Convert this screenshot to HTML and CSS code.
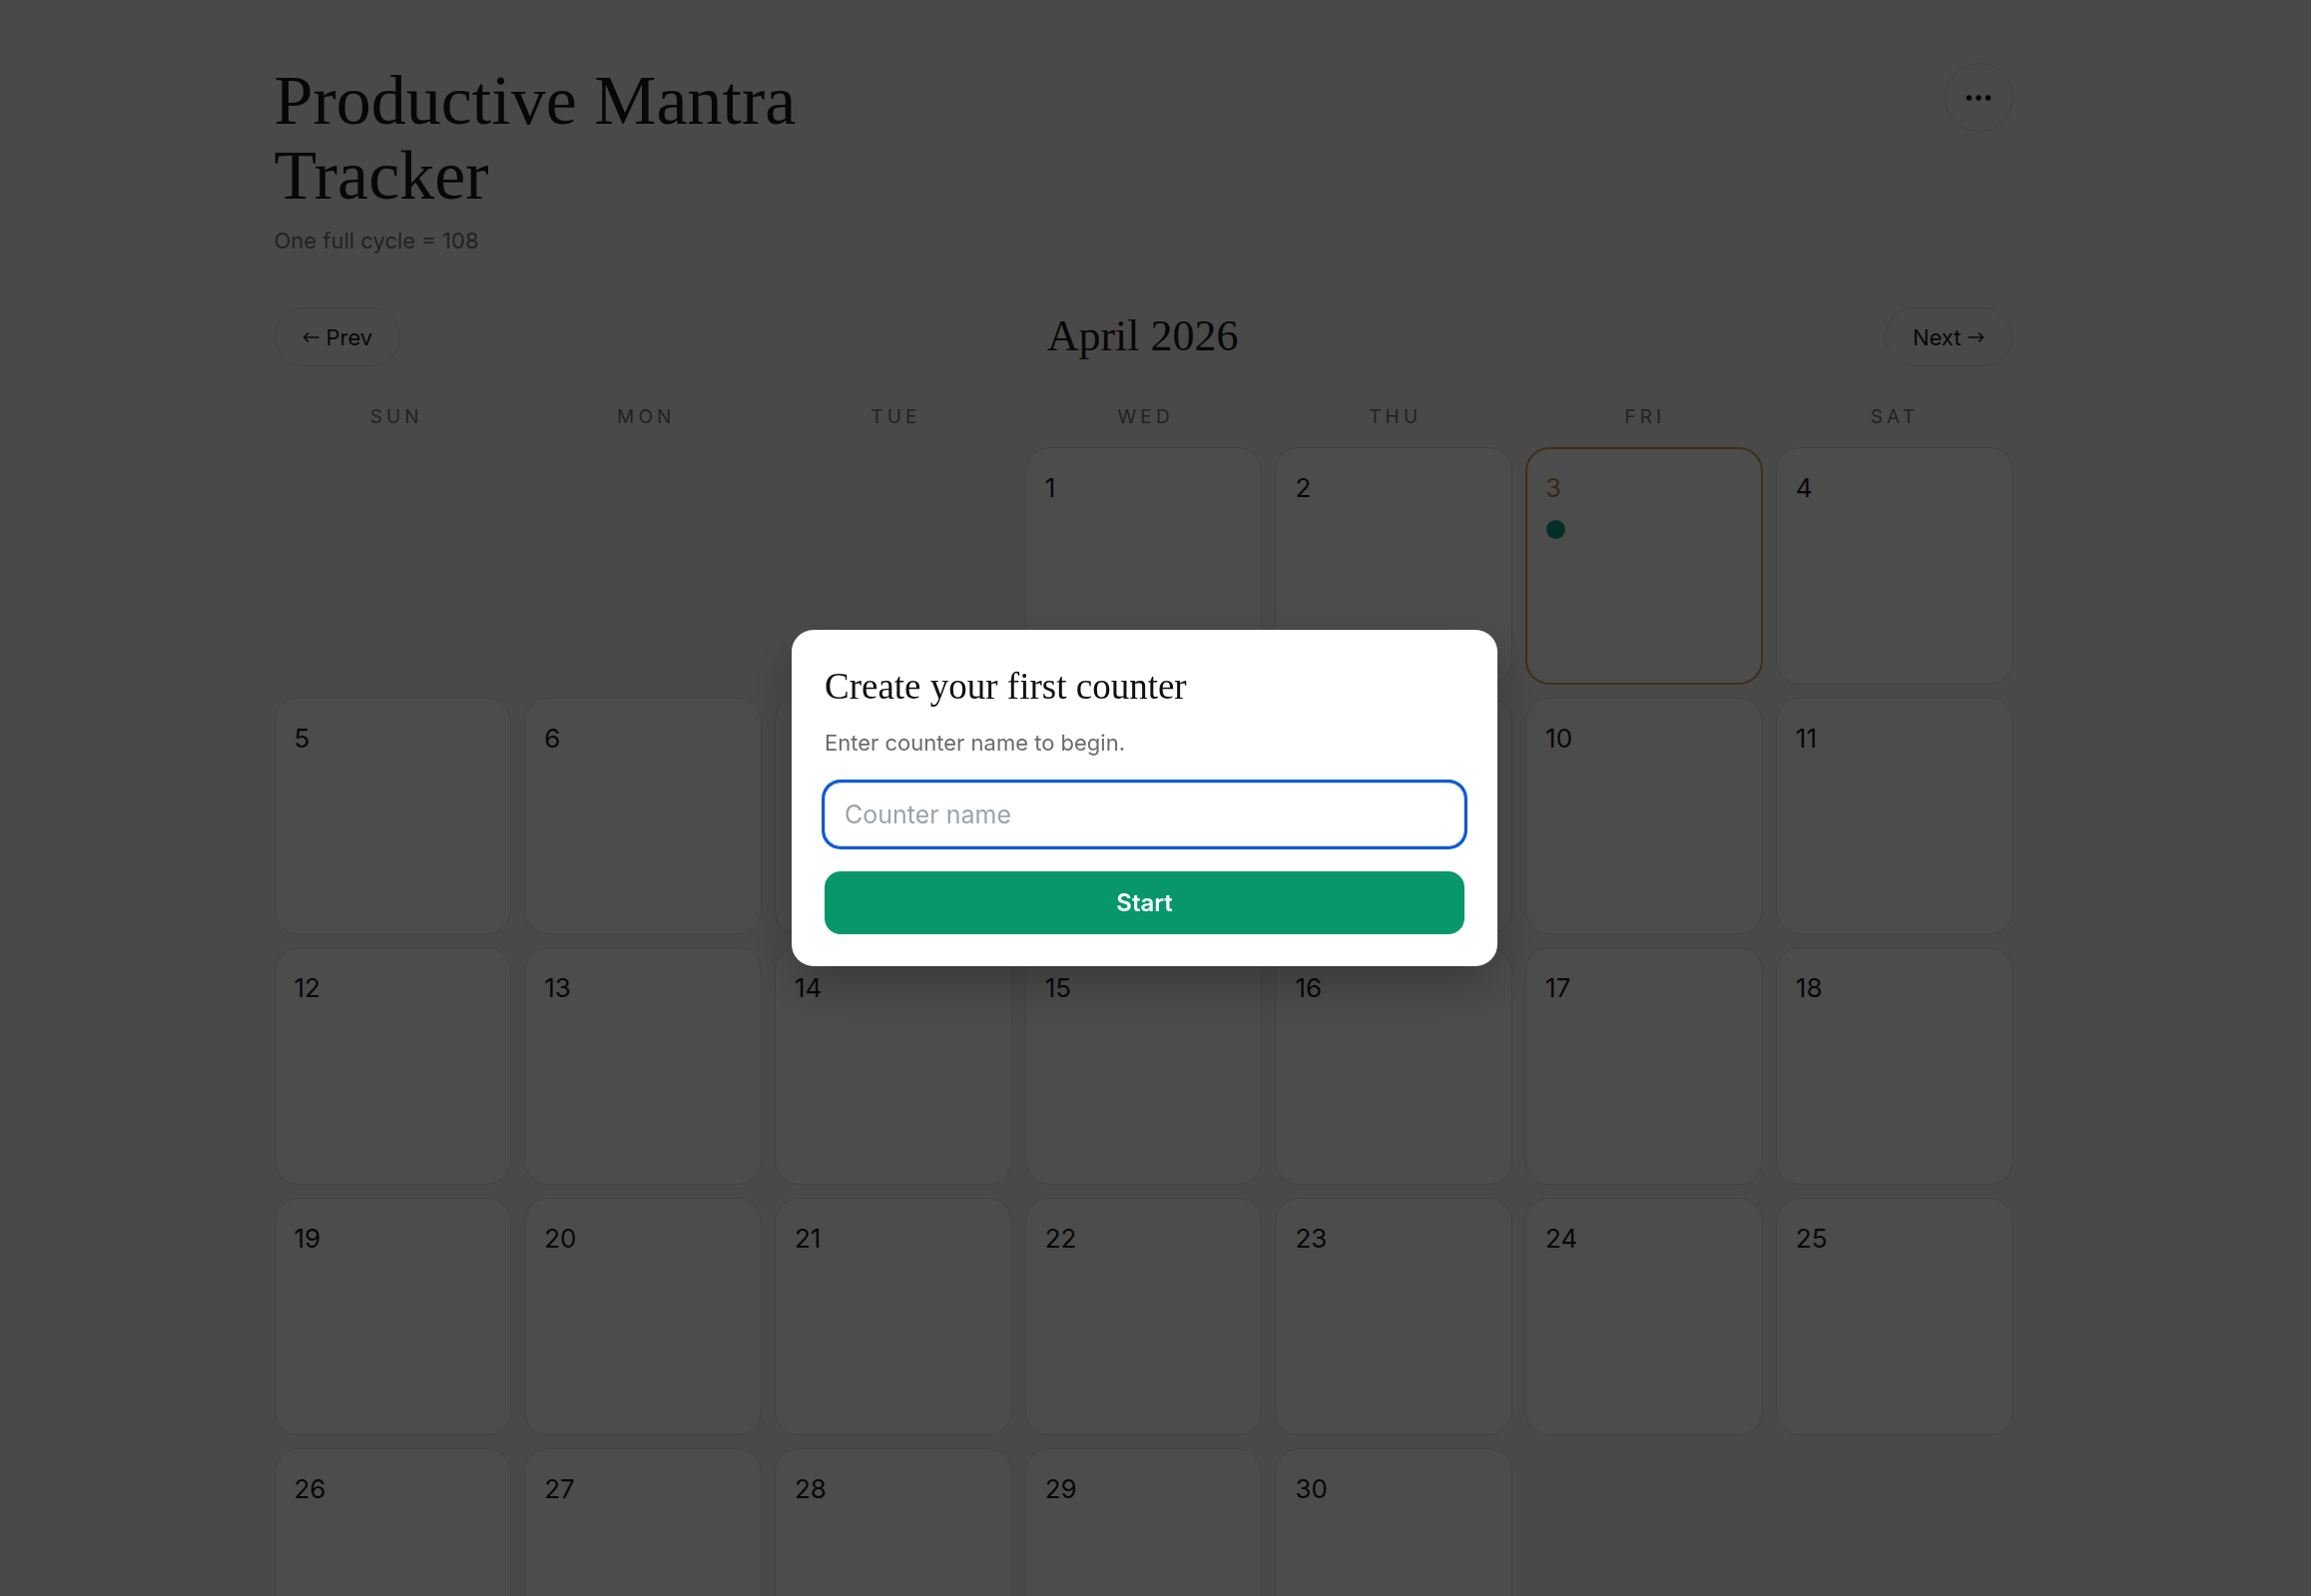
FILE: index.html
```html
<!DOCTYPE html>
<html lang="en">
<head>
    <meta charset="UTF-8">
    <meta name="viewport" content="width=device-width, initial-scale=1.0">
    <title>Productive Mantra Tracker</title>
    <link rel="stylesheet" href="styles.css">
</head>
<body>
    <div class="container">
        <div class="header">
            <div>
                <h1 class="title">Productive Mantra Tracker</h1>
                <p class="subtitle">One full cycle = 108</p>
            </div>
            <button class="menu-btn" aria-label="Menu">
                <svg width="28" height="8" viewBox="0 0 28 8">
                    <circle cx="4.5" cy="4" r="2.7" />
                    <circle cx="14" cy="4" r="2.7" />
                    <circle cx="23.5" cy="4" r="2.7" />
                </svg>
            </button>
        </div>

        <div class="month-nav">
            <button class="nav-btn">
                <svg class="arrow" width="17" height="12" viewBox="0 0 17 12">
                    <path d="M16 6H1.5M5.5 2L1.5 6l4 4" />
                </svg>
                Prev
            </button>
            <h2 class="month-title">April 2026</h2>
            <button class="nav-btn">
                Next
                <svg class="arrow" width="17" height="12" viewBox="0 0 17 12">
                    <path d="M1 6h14.5M11.5 2l4 4-4 4" />
                </svg>
            </button>
        </div>

        <div class="weekdays">
            <div>SUN</div>
            <div>MON</div>
            <div>TUE</div>
            <div>WED</div>
            <div>THU</div>
            <div>FRI</div>
            <div>SAT</div>
        </div>

        <div class="calendar" id="calendar"></div>
    </div>

    <div class="overlay">
        <div class="modal">
            <h3 class="modal-title">Create your first counter</h3>
            <p class="modal-text">Enter counter name to begin.</p>
            <input type="text" class="name-input" placeholder="Counter name" autofocus>
            <button class="start-btn">Start</button>
        </div>
    </div>

    <script>
        const calendar = document.getElementById('calendar');
        const firstDay = 3;   // April 1, 2026 is a Wednesday
        const daysInMonth = 30;
        const today = 3;

        for (let i = 0; i < firstDay; i++) {
            const empty = document.createElement('div');
            empty.className = 'day empty';
            calendar.appendChild(empty);
        }

        for (let d = 1; d <= daysInMonth; d++) {
            const cell = document.createElement('div');
            cell.className = d === today ? 'day today' : 'day';
            cell.innerHTML = `<span class="day-num">${d}</span>`;
            if (d === today) {
                cell.innerHTML += '<span class="dot"></span>';
            }
            calendar.appendChild(cell);
        }
    </script>
</body>
</html>
```

FILE: styles.css
```css
* {
    margin: 0;
    padding: 0;
    box-sizing: border-box;
}

html, body {
    overflow: hidden;
}

body {
    background: #f5f5f4;
    font-family: 'Inter', 'Noto Sans', sans-serif;
    color: #1c1917;
    padding-right: 24px;
    min-height: 100vh;
}

.container {
    max-width: 1742px;
    margin: 0 auto;
    padding-top: 63px;
}

.header {
    display: flex;
    justify-content: space-between;
    align-items: flex-start;
}

.title {
    font-family: 'Liberation Serif', 'Times New Roman', serif;
    font-weight: 400;
    font-size: 70px;
    line-height: 75px;
    max-width: 640px;
    color: #1c1917;
}

.subtitle {
    margin-top: 12px;
    font-size: 22px;
    line-height: 33px;
    color: #737373;
}

.menu-btn {
    width: 69px;
    height: 69px;
    border-radius: 50%;
    border: 1px solid #dcdad6;
    background: transparent;
    display: flex;
    align-items: center;
    justify-content: center;
}

.menu-btn svg {
    fill: #111;
}

.month-nav {
    margin-top: 50px;
    display: flex;
    justify-content: space-between;
    align-items: center;
}

.nav-btn {
    height: 59px;
    padding: 0 27px;
    border: 1px solid #dcdad6;
    border-radius: 999px;
    background: transparent;
    font-family: 'Inter', sans-serif;
    font-size: 22px;
    color: #1c1917;
    display: flex;
    align-items: center;
    gap: 7px;
}

.arrow {
    fill: none;
    stroke: #1c1917;
    stroke-width: 1.6;
    stroke-linecap: round;
    stroke-linejoin: round;
}

.month-title {
    font-family: 'Liberation Serif', 'Times New Roman', serif;
    font-weight: 400;
    font-size: 44px;
    line-height: 1.2;
    color: #1c1917;
}

.weekdays {
    margin-top: 39px;
    display: grid;
    grid-template-columns: repeat(7, 1fr);
    gap: 13px;
    text-align: center;
    font-size: 19px;
    line-height: 23px;
    letter-spacing: 0.22em;
    padding-left: 0.22em;
    color: #78716c;
}

.calendar {
    margin-top: 19px;
    display: grid;
    grid-template-columns: repeat(7, 1fr);
    gap: 13px;
}

.day {
    aspect-ratio: 1;
    background: #fff;
    border: 1px solid #dfdcd8;
    border-radius: 24px;
    padding: 24px 19px;
    display: flex;
    flex-direction: column;
    align-items: flex-start;
}

.day.empty {
    background: none;
    border: none;
}

.day-num {
    font-size: 26px;
    line-height: 1.2;
}

.day.today {
    border: 2px solid #cf9f50;
    padding: 23px 18px;
}

.day.today .day-num {
    color: #b98a3e;
}

.dot {
    margin-top: 17px;
    margin-left: 1px;
    width: 19px;
    height: 19px;
    border-radius: 50%;
    background: #0e9f8a;
}

.overlay {
    position: fixed;
    inset: 0;
    background: rgba(0, 0, 0, 0.7);
    display: flex;
    justify-content: center;
    align-items: center;
    padding-right: 22px;
}

.modal {
    width: 707px;
    background: #fff;
    border-radius: 22px;
    padding: 35px 33px 32px;
    box-shadow: 0 20px 50px rgba(0, 0, 0, 0.25);
}

.modal-title {
    font-family: 'Liberation Serif', 'Times New Roman', serif;
    font-weight: 400;
    font-size: 37px;
    line-height: 1.2;
    color: #111;
}

.modal-text {
    margin-top: 17px;
    font-size: 22px;
    line-height: 1.5;
    color: #6b6b6b;
}

.name-input {
    display: block;
    margin-top: 23px;
    width: 100%;
    height: 64px;
    padding: 0 19px;
    border: 1px solid #d4d4d8;
    border-radius: 16px;
    font-family: 'Inter', sans-serif;
    font-size: 25px;
    color: #1c1917;
    outline: none;
    box-shadow: 0 0 0 3px #0a5bd6;
}

.name-input::placeholder {
    color: #9ca3af;
}

.start-btn {
    display: block;
    margin-top: 25px;
    width: 100%;
    height: 63px;
    border: none;
    border-radius: 16px;
    background: #07976b;
    color: #fff;
    font-family: 'Inter', sans-serif;
    font-size: 24px;
    font-weight: 600;
}
```
